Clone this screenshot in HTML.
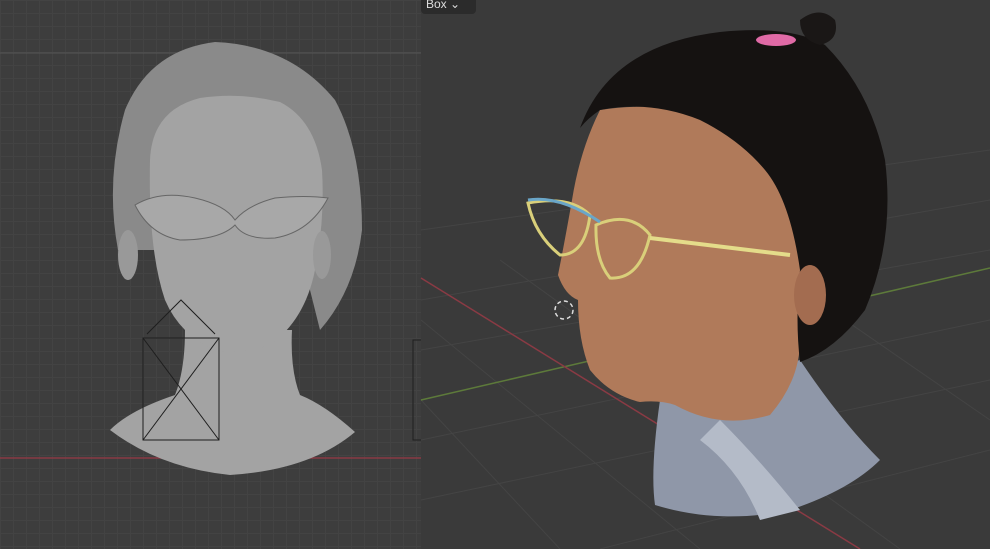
<!DOCTYPE html>
<html><head><meta charset="utf-8"><style>
html,body{margin:0;padding:0;width:990px;height:549px;overflow:hidden;background:#3b3b3b;font-family:"Liberation Sans",sans-serif}
#l{position:absolute;left:0;top:0;width:421px;height:549px;background-color:#3d3d3d;
background-image:linear-gradient(#434343 1px,transparent 1px),linear-gradient(90deg,#434343 1px,transparent 1px);background-size:13px 13px;}
#r{position:absolute;left:421px;top:0;width:569px;height:549px;background:#3a3a3a}
#box{position:absolute;left:421px;top:0;width:55px;height:14px;background:#2b2b2b;border-radius:0 0 4px 4px;color:#ddd;font-size:12px;line-height:8px;padding-left:5px;box-sizing:border-box}
</style></head><body>
<div id="l"></div>
<div id="r"></div>
<svg width="990" height="549" style="position:absolute;left:0;top:0">
<line x1="0" y1="53" x2="421" y2="53" stroke="#555" stroke-width="1"/>
<line x1="0" y1="458" x2="421" y2="458" stroke="#8a3a44" stroke-width="1.5"/>
<g stroke="#444" stroke-width="1">
<line x1="421" y1="300" x2="990" y2="200"/><line x1="421" y1="350" x2="990" y2="250"/>
<line x1="421" y1="440" x2="990" y2="320"/><line x1="421" y1="500" x2="990" y2="380"/>
<line x1="421" y1="230" x2="990" y2="150"/><line x1="600" y1="549" x2="990" y2="450"/>
<line x1="421" y1="320" x2="700" y2="549"/><line x1="500" y1="260" x2="900" y2="549"/>
<line x1="700" y1="220" x2="990" y2="420"/><line x1="421" y1="400" x2="560" y2="549"/>
</g>
<line x1="421" y1="400" x2="990" y2="268" stroke="#5d7a3a" stroke-width="1.5"/>
<line x1="421" y1="278" x2="860" y2="549" stroke="#8a3a44" stroke-width="1.5"/>
<!-- left bust -->
<path d="M125 110 Q150 50 215 42 Q290 45 335 100 Q362 150 362 230 Q355 290 320 330 L300 250 L170 250 L118 250 Q105 180 125 110 Z" fill="#8a8a8a"/>
<path d="M185 330 Q185 370 175 395 Q130 410 110 430 Q160 468 230 475 Q310 470 355 432 Q325 405 300 395 Q290 370 292 330 Z" fill="#a3a3a3"/>
<path d="M150 160 Q152 110 200 98 Q240 92 280 102 Q315 120 322 170 Q325 220 315 270 Q305 320 270 345 Q240 355 215 350 Q180 335 165 300 Q148 250 150 160Z" fill="#a3a3a3"/>
<ellipse cx="128" cy="255" rx="10" ry="25" fill="#999"/><ellipse cx="322" cy="255" rx="9" ry="24" fill="#999"/>
<path d="M135 205 Q160 190 195 198 Q225 205 235 220 Q248 205 275 198 Q305 195 328 198 Q310 232 275 238 Q245 240 235 225 Q220 240 180 240 Q150 235 135 205Z" fill="#a8a8a8" stroke="#666" stroke-width="1"/>
<g fill="none" stroke="#1e1e1e" stroke-width="1"><rect x="143" y="338" width="76" height="102"/><line x1="143" y1="338" x2="219" y2="440"/><line x1="219" y1="338" x2="143" y2="440"/><path d="M147 334 L181 300 L215 334"/><path d="M421 340 L413 340 L413 440 L421 440"/></g>
<!-- right bust -->
<path d="M660 400 Q650 470 655 505 Q720 525 790 510 Q850 490 880 460 Q840 420 800 360 Z" fill="#8f97a8"/>
<path d="M700 440 Q740 470 760 520 L800 510 Q760 460 720 420Z" fill="#b4bbc8"/>
<path d="M600 110 Q580 150 572 200 Q565 240 558 275 Q565 295 578 300 Q578 340 590 370 Q610 395 640 402 Q660 400 675 405 Q720 430 770 415 Q800 380 800 340 Q805 300 800 250 Q780 160 720 120 Q660 100 600 110Z" fill="#b07a5a"/>
<path d="M580 128 Q610 45 720 32 Q790 25 825 45 Q870 90 885 160 Q895 240 865 310 Q835 350 800 362 Q795 320 800 270 Q790 200 765 170 Q740 140 700 120 Q650 100 600 110 Q588 118 580 128Z" fill="#151211"/>
<path d="M800 20 Q820 5 835 20 Q840 40 820 45 Q800 40 800 20Z" fill="#1a1716"/>
<ellipse cx="776" cy="40" rx="20" ry="6" fill="#e06aa6"/>
<ellipse cx="810" cy="295" rx="16" ry="30" fill="#a36c50"/>
<g fill="none" stroke-width="3"><path d="M528 203 Q570 195 590 215 Q585 255 560 255 Q535 235 528 203Z" stroke="#d9cf7a"/><path d="M596 225 Q630 210 650 235 Q640 280 610 278 Q595 260 596 225Z" stroke="#d9cf7a"/><path d="M650 238 L790 255" stroke="#e4dc8a" stroke-width="4"/><path d="M528 200 Q560 195 600 222" stroke="#6aa6c8"/></g>
<circle cx="564" cy="310" r="9" fill="none" stroke="#ddd" stroke-width="1.5" stroke-dasharray="4 3"/>
</svg>
<div id="box">Box ⌄</div>
</body></html>
